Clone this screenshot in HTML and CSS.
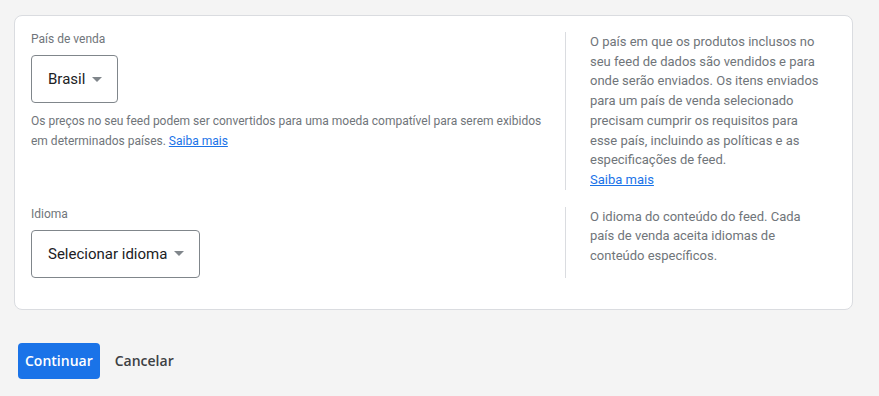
FILE: index.html
```html
<!DOCTYPE html>
<html lang="pt-BR">
<head>
    <meta charset="UTF-8">
    <title>Configurar feed</title>
    <link rel="stylesheet" href="styles.css">
</head>
<body>
    <div class="page">
        <div class="card">
            <div class="row">
                <div class="field">
                    <div class="field-label">País de venda</div>
                    <button class="select" type="button">Brasil <span class="caret"></span></button>
                    <p class="hint">Os preços no seu feed podem ser convertidos para uma moeda compatível para serem exibidos em determinados países. <a href="#">Saiba mais</a></p>
                </div>
                <div class="aside">
                    <p>O país em que os produtos inclusos no seu feed de dados são vendidos e para onde serão enviados. Os itens enviados para um país de venda selecionado precisam cumprir os requisitos para esse país, incluindo as políticas e as especificações de feed.<br><a href="#">Saiba mais</a></p>
                </div>
            </div>
            <div class="row">
                <div class="field">
                    <div class="field-label">Idioma</div>
                    <button class="select" type="button">Selecionar idioma <span class="caret"></span></button>
                </div>
                <div class="aside">
                    <p>O idioma do conteúdo do feed. Cada país de venda aceita idiomas de conteúdo específicos.</p>
                </div>
            </div>
        </div>
        <div class="actions">
            <button class="btn btn-primary" type="button">Continuar</button>
            <button class="btn btn-text" type="button">Cancelar</button>
        </div>
    </div>
</body>
</html>
```

FILE: styles.css
```css
body {
    margin: 0;
    background-color: #f4f4f4;
    font-family: Roboto, Arial, sans-serif;
    color: #202124;
}
.page {
    padding: 15px 26px 0 14px;
}
.card {
    background-color: #fff;
    border: 1px solid #dadce0;
    border-radius: 8px;
    padding: 15px 16px 31px;
    display: flex;
    flex-direction: column;
    gap: 16px;
}
.row {
    display: flex;
}
.field {
    flex: 1;
    padding-right: 16px;
}
.field-label {
    font-size: 12px;
    line-height: 16px;
    color: #70757a;
    margin-bottom: 8px;
}
.select {
    display: inline-flex;
    align-items: center;
    height: 48px;
    padding: 0 15px 0 16px;
    background: #fff;
    border: 1px solid #80868b;
    border-radius: 4px;
    font-family: Roboto, Arial, sans-serif;
    font-size: 15px;
    color: #202124;
    cursor: pointer;
}
.caret {
    width: 0;
    height: 0;
    margin-left: 7px;
    border-left: 5px solid transparent;
    border-right: 5px solid transparent;
    border-top: 5px solid #80868b;
}
.hint {
    margin: 8px 0 0;
    font-size: 12px;
    line-height: 20px;
    color: #70757a;
}
a {
    color: #1a73e8;
}
.aside {
    width: 232px;
    margin-right: 14px;
    border-left: 1px solid #dadce0;
    padding-left: 24px;
    margin-top: 1px;
}
.aside p {
    margin: 0;
    font-size: 13px;
    line-height: 19.7px;
    color: #70757a;
}
.actions {
    display: flex;
    gap: 8px;
    margin: 33px 0 0 4px;
}
.btn {
    height: 36px;
    padding: 0 7px;
    border: none;
    border-radius: 4px;
    font-family: "Open Sans", Roboto, Arial, sans-serif;
    font-size: 14px;
    font-weight: 600;
    cursor: pointer;
}
.btn-primary {
    background-color: #1a73e8;
    color: #fff;
}
.btn-text {
    background: transparent;
    color: #3c4043;
}
```
